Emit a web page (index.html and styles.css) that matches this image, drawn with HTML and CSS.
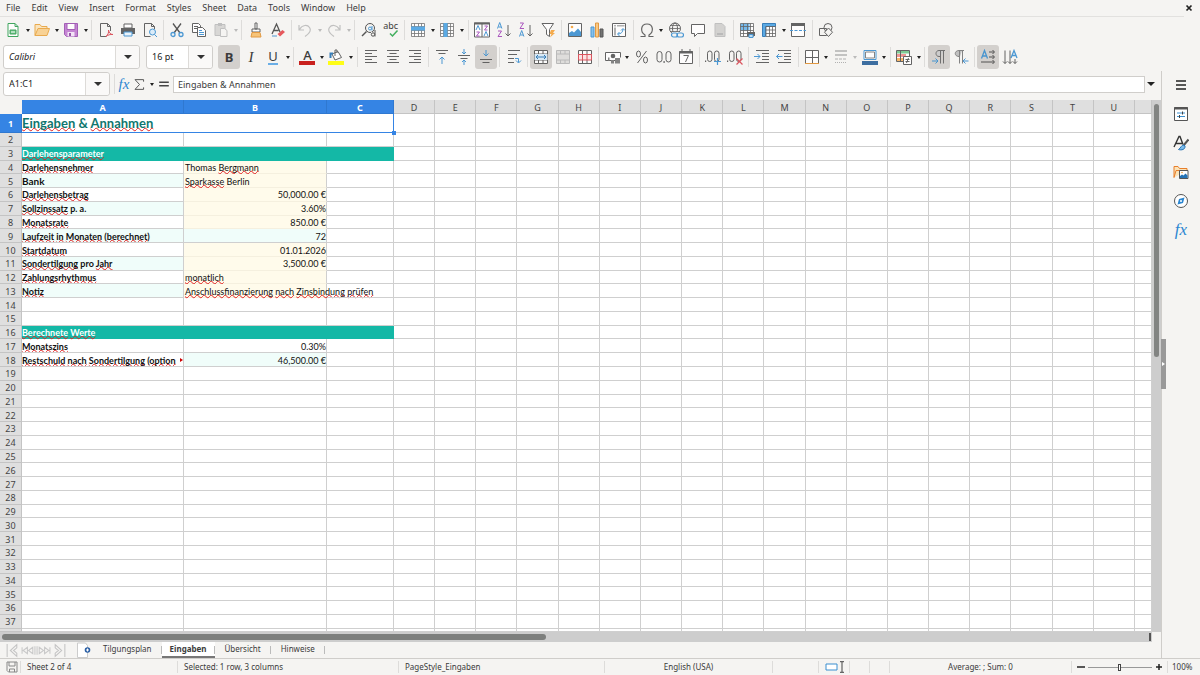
FILE: index.html
```html
<!DOCTYPE html>
<html lang="de">
<head>
<meta charset="utf-8">
<title>Eingaben</title>
<link rel="stylesheet" href="styles.css">
</head>
<body>
<nav class="menubar">
  <button>File</button><button>Edit</button><button>View</button><button>Insert</button><button>Format</button><button>Styles</button><button>Sheet</button><button>Data</button><button>Tools</button><button>Window</button><button>Help</button>
  <button class="close" aria-label="Close"><svg viewBox="0 0 8 8"><path d="M1.5 1.5l5 5m0-5l-5 5" stroke="#222" stroke-width="1.7"/></svg></button>
</nav>

<div class="toolbar standard">
  <button class="tool" aria-label="New"><svg viewBox="0 0 16 16"><path d="M3 1.500h7l3 3v10h-10z" fill="#fff" stroke="#2e9e50"/><path d="M10 1.500v3h3" stroke="#2e9e50"/><path d="M5 8h6v4h-6z" fill="#5dbb78" stroke="#2e9e50"/><path d="M6 10h4" stroke="#fff"/></svg></button><button class="drop" aria-label="New options"></button>
  <button class="tool" aria-label="Open"><svg viewBox="0 0 16 16"><path d="M1 13.500v-11h5l1.500 2h5.500v3" fill="#fbe3b8" stroke="#e8a33d"/><path d="M1 13.500l3-7h11.500l-2.500 7z" fill="#f9cf8b" stroke="#e8a33d"/></svg></button><button class="drop" aria-label="Open options"></button>
  <button class="tool" aria-label="Save"><svg viewBox="0 0 16 16"><path d="M1.500 1.500h13v13h-11l-2-2z" fill="#c07ad0" stroke="#9b4fb0"/><path d="M4 1.500h8v6h-8z" fill="#fff" stroke="#9b4fb0"/><path d="M4.500 10h7v4.500h-7z" fill="#f3e3f7"/><path d="M6 11h2v3h-2z" fill="#8d44a3"/></svg></button><button class="drop" aria-label="Save options"></button>
  <span class="sep"></span>
  <button class="tool" aria-label="Export as PDF"><svg viewBox="0 0 16 16"><path d="M12.500 9v-4.500l-3-3h-7v13h6M9.500 1.500v3h3" stroke="#555" fill="none"/><path d="M8 14.500c2-2 3-4 2.500-6.500c.5 3 2 4.500 4.500 4.500c-3-.3-5 .5-7 2z" stroke="#d9434e"/></svg></button>
  <button class="tool" aria-label="Print"><svg viewBox="0 0 16 16"><path d="M4 2h8v4h-8z" fill="#fff" stroke="#555"/><path d="M1 6h14v6h-14z" fill="#555"/><path d="M4 10h8v4h-8z" fill="#e9f3fb" stroke="#3a8fd0"/></svg></button>
  <button class="tool" aria-label="Print preview"><svg viewBox="0 0 16 16"><path d="M12.500 7v-2.500l-3-3h-7v13h6M9.500 1.500v3h3" stroke="#555"/><circle cx="10.500" cy="10" r="3" fill="#d9ecfa" stroke="#3a8fd0"/><path d="M12.500 12.500l2.500 2.500" stroke="#3a8fd0"/></svg></button>
  <span class="sep"></span>
  <button class="tool" aria-label="Cut"><svg viewBox="0 0 16 16"><path d="M4 1.500l7 9.500M12 1.500l-7 9.500" stroke="#444" stroke-width="1.300"/><circle cx="4" cy="12.500" r="2" stroke="#3a8fd0" stroke-width="1.300"/><circle cx="12" cy="12.500" r="2" stroke="#3a8fd0" stroke-width="1.300"/></svg></button>
  <button class="tool" aria-label="Copy"><svg viewBox="0 0 16 16"><path d="M1.500 1.500h6l2 2v7h-8zM3 4.500h4M3 6.500h4" fill="#fff" stroke="#555"/><path d="M6.500 5.500h5l3 3v6h-8z" fill="#fff" stroke="#555"/><path d="M8 8.500h3M8 10.500h5M8 12.500h5" stroke="#3a8fd0"/></svg></button>
  <button class="tool" aria-label="Paste" disabled><svg viewBox="0 0 16 16"><path d="M2 2.500h10v11h-10z" fill="#d5d4d2" stroke="#bbb"/><path d="M5 1h4v3h-4z" fill="#bbb"/><path d="M7.500 6.500h4l2.500 2v6h-6.500z" fill="#f5f4f2" stroke="#bbb"/></svg></button><button class="drop" aria-label="Paste options" disabled></button>
  <span class="sep"></span>
  <button class="tool" aria-label="Clone formatting"><svg viewBox="0 0 16 16"><path d="M7 1h2v6h-2zM4 7h8v3h-8z" fill="#fff" stroke="#555"/><path d="M4 10.500h8l1 4.500h-10z" fill="#f8bf6c" stroke="#e09030"/></svg></button>
  <button class="tool" aria-label="Clear formatting"><svg viewBox="0 0 16 16"><path d="M2 12l4.500-10l3.500 8M3.500 8.500h5" stroke="#444" stroke-width="1.300"/><path d="M2 14h5" stroke="#3a8fd0"/><path d="M7.500 12l5-4l2.500 2l-5 4.500z" fill="#e5484d"/></svg></button>
  <span class="sep"></span>
  <button class="tool" aria-label="Undo" disabled><svg viewBox="0 0 16 16"><path d="M2 3v5h5M2.500 7.500c3-5 8-5 10-2s0 6-4.500 9" stroke="#bbb" stroke-width="1.200"/></svg></button><button class="drop" aria-label="Undo list" disabled></button>
  <button class="tool" aria-label="Redo" disabled><svg viewBox="0 0 16 16"><path d="M14 3v5h-5M13.500 7.500c-3-5-8-5-10-2s0 6 4.500 9" stroke="#bbb" stroke-width="1.200"/></svg></button><button class="drop" aria-label="Redo list" disabled></button>
  <span class="sep"></span>
  <button class="tool" aria-label="Find and replace"><svg viewBox="0 0 16 16"><circle cx="9" cy="6" r="4.500" stroke="#444"/><path d="M5.500 9.500l-4.500 4.500" stroke="#444" stroke-width="1.500"/><circle cx="9" cy="6.500" r="1.500" stroke="#3a8fd0"/><path d="M11 4v4.500" stroke="#3a8fd0"/><path d="M10 10h5v5h-5z" fill="#f5f4f2"/><circle cx="12" cy="12.500" r="1.700" stroke="#444"/><path d="M14 8v6.500" stroke="#444"/></svg></button>
  <button class="tool spelling" aria-label="Spelling"><span>abc</span><svg viewBox="0 0 16 16"><path d="M7 11.500l2.500 2.500l5-5.500" stroke="#2fa84f" stroke-width="1.500"/></svg></button>
  <span class="sep"></span>
  <button class="tool" aria-label="Rows"><svg viewBox="0 0 16 16"><path d="M1.500 1.500h13v13h-13z" fill="#fff"/><path d="M1.500 1.500h13v13h-13zM1.500 4.500h13M1.500 8.500h13M1.500 11.500h13M4.500 1.500v13M8.500 1.500v13M11.500 1.500v13" stroke="#666" stroke-width=".8"/><path d="M1 4.500h14v4h-14z" fill="#4ba3e3"/></svg></button><button class="drop" aria-label="Row options"></button>
  <button class="tool" aria-label="Columns"><svg viewBox="0 0 16 16"><path d="M1.500 1.500h13v13h-13z" fill="#fff"/><path d="M1.500 1.500h13v13h-13zM1.500 4.500h13M1.500 8.500h13M1.500 11.500h13M4.500 1.500v13M8.500 1.500v13M11.500 1.500v13" stroke="#666" stroke-width=".8"/><path d="M4.500 1h4v14h-4z" fill="#4ba3e3"/></svg></button><button class="drop" aria-label="Column options"></button>
  <span class="sep"></span>
  <button class="tool" aria-label="Sort"><svg viewBox="0 0 16 16"><path d="M.5 1h15v14h-15zM8 1v14" fill="#fff" stroke="#555"/><path d="M0 1.500h16" stroke="#555" stroke-width="2"/><path d="M2 8l2-4.500l2 4.500M10 14l2-4.500l2 4.500" stroke="#3a8fd0"/><path d="M2.500 10h3l-3 4h3M10.500 4h3l-3 4h3" stroke="#a347ba"/></svg></button>
  <button class="tool" aria-label="Sort ascending"><svg viewBox="0 0 16 16"><path d="M1.500 6.500l2.200-6l2.200 6M2.500 5h2.500" stroke="#3a8fd0"/><path d="M2 9h3.500l-3.500 5.500h4" stroke="#a347ba"/><path d="M12 3v11M9.500 11.500l2.500 2.500l2.500-2.500" stroke="#555"/></svg></button>
  <button class="tool" aria-label="Sort descending"><svg viewBox="0 0 16 16"><path d="M2 1h3.500l-3.500 5.500h4" stroke="#a347ba"/><path d="M1.500 14.500l2.200-6l2.200 6M2.500 13h2.500" stroke="#3a8fd0"/><path d="M12 3v11M9.500 11.500l2.500 2.500l2.500-2.500" stroke="#555"/></svg></button>
  <button class="tool" aria-label="AutoFilter"><svg viewBox="0 0 16 16"><path d="M2 1.500h11.500l-4 6v7l-3-2v-5z" fill="#fff" stroke="#555"/><path d="M11 8h4l-2 3h2l-5 4.500l1.500-3.500h-2z" fill="#f4a33a"/></svg></button>
  <span class="sep"></span>
  <button class="tool" aria-label="Insert image"><svg viewBox="0 0 16 16"><path d="M1.500 1.500h13v13h-13z" fill="#fff" stroke="#555"/><path d="M2 14v-3l3-2l2 1.500l4-4l3 3.500v4z" fill="#3a8fd0"/><circle cx="5" cy="5" r="1.300" fill="#f4a33a"/></svg></button>
  <button class="tool" aria-label="Insert chart"><svg viewBox="0 0 16 16"><path d="M2 5h3v10h-3z" fill="#7bbcec" stroke="#3a8fd0"/><path d="M6.500 1h3v14h-3z" fill="#fac57a" stroke="#e09030"/><path d="M11 7h3v8h-3z" fill="#666" stroke="#444"/></svg></button>
  <button class="tool" aria-label="Pivot table"><svg viewBox="0 0 16 16"><path d="M1.500 1.500h13v13h-13z" fill="#fff" stroke="#555"/><path d="M3 5.500h2v8h-2zM3 3h2v1.500h-2zM6 3h7.500v1.500h-7.500z" fill="#aaa"/><path d="M7 12c3 0 5-2 5-5M6.500 12l2-2M6.500 12l2 2M12 6.500l-2 2M12 6.500l2 2" stroke="#3a8fd0"/></svg></button>
  <span class="sep"></span>
  <button class="tool" aria-label="Special character"><svg viewBox="0 0 16 16"><path d="M1.500 14.500h4.500v-1.500c-5-3-4.500-11 2-11s7 8 2 11v1.500h4.500" stroke="#555" stroke-width="1.200"/></svg></button><button class="drop" aria-label="Special character list"></button>
  <button class="tool" aria-label="Hyperlink"><svg viewBox="0 0 16 16"><circle cx="7" cy="6.500" r="5.500" stroke="#555"/><ellipse cx="7" cy="6.500" rx="2.500" ry="5.500" stroke="#555"/><path d="M1.500 6.500h11M2.500 3.500h9M2.500 9.500h9" stroke="#555" stroke-width=".8"/><path d="M4 10h12v6h-12z" fill="#f5f4f2"/><rect x="3.500" y="11" width="6" height="4" rx="2" stroke="#3a8fd0" stroke-width="1.200"/><rect x="9" y="11" width="6.500" height="4" rx="2" stroke="#3a8fd0" stroke-width="1.200"/></svg></button>
  <button class="tool" aria-label="Comment"><svg viewBox="0 0 16 16"><path d="M1.500 2.500h13v9h-7l-3 3v-3h-3z" fill="#fff" stroke="#555"/></svg></button>
  <button class="tool" aria-label="Headers and footers" disabled><svg viewBox="0 0 16 16"><path d="M3 1.500h7l3 3v10h-10z" fill="#d0cfcd" stroke="#bbb"/><path d="M5 11h6v2h-6z" fill="#b4b4b4"/></svg></button>
  <span class="sep"></span>
  <button class="tool" aria-label="Print area"><svg viewBox="0 0 16 16"><path d="M1.500 1.500h13v13h-13z" fill="#fff"/><path d="M1.500 1.500h9v7h-9z" fill="#69b3ea"/><path d="M1.500 1.500h13v13h-13zM1.500 4.500h13M1.500 8.500h13M1.500 11.500h13M4.500 1.500v13M8.500 1.500v13M11.500 1.500v13" stroke="#555" stroke-width=".8"/><path d="M8 10h8v4h-8z" fill="#555"/><path d="M10 12.500h4v3h-4z" fill="#b9dcf6" stroke="#3a8fd0"/></svg></button>
  <button class="tool" aria-label="Freeze rows and columns"><svg viewBox="0 0 16 16"><path d="M1.500 1.500h13v13h-13z" fill="#fff"/><path d="M1.500 1.500h13v3h-10v10h-3z" fill="#4ba3e3" stroke="#2573b5"/><path d="M5 8h9.500M5 11.500h9.500M8.500 4v10.500M11.500 4v10.500M5 4.500h9.500v10h-9.500z" stroke="#555" stroke-width=".8"/></svg></button><button class="drop" aria-label="Freeze options"></button>
  <button class="tool" aria-label="Split window"><svg viewBox="0 0 16 16"><path d="M1.500 1.500h13v13h-13z" fill="#fff" stroke="#555"/><path d="M1 2.500h14" stroke="#555" stroke-width="3"/><path d="M0 8.500h16" stroke="#3a8fd0" stroke-dasharray="3 1.500"/></svg></button>
  <span class="sep"></span>
  <button class="tool" aria-label="Draw functions"><svg viewBox="0 0 16 16"><path d="M1.500 6.500h7v7h-7z" stroke="#555"/><circle cx="10" cy="5.500" r="4" stroke="#555"/><path d="M10.500 6l4 4.200l-4 4.300l-4-4.300z" fill="#f5f4f2" stroke="#555"/></svg></button>
</div>

<div class="toolbar formatting">
  <label class="combo font-name"><select aria-label="Font name"><option>Calibri</option></select></label>
  <label class="combo font-size"><select aria-label="Font size"><option>16 pt</option></select></label>
  <button class="tool on letter bold" aria-label="Bold">B</button>
  <button class="tool letter italic" aria-label="Italic">I</button>
  <button class="tool letter under" aria-label="Underline"><span>U</span></button><button class="drop" aria-label="Underline options"></button>
  <span class="sep"></span>
  <button class="tool letter" aria-label="Font colour"><span class="ink">A</span></button><button class="drop" aria-label="Font colours"></button>
  <button class="tool" aria-label="Highlight colour"><svg viewBox="0 0 16 16"><path d="M4 5l6-2.500l3.500 6l-6.500 2.500z" fill="#fff" stroke="#555"/><path d="M7 7v-6h2v3" stroke="#555"/><path d="M2.500 9v-4.500h2.500" stroke="#2573b5" stroke-width="2"/><path d="M0 12h16v4h-16z" fill="#ff0"/></svg></button><button class="drop" aria-label="Highlight colours"></button>
  <span class="sep"></span>
  <button class="tool" aria-label="Align left"><svg viewBox="0 0 16 16"><path d="M2 1.500h12M2 4.500h7M2 7.500h12M2 10.500h7M2 13.500h12" stroke="#555"/></svg></button>
  <button class="tool" aria-label="Centre"><svg viewBox="0 0 16 16"><path d="M2 1.500h12M4.500 4.500h7M2 7.500h12M4.500 10.500h7M2 13.500h12" stroke="#555"/></svg></button>
  <button class="tool" aria-label="Align right"><svg viewBox="0 0 16 16"><path d="M2 1.500h12M7 4.500h7M2 7.500h12M7 10.500h7M2 13.500h12" stroke="#555"/></svg></button>
  <span class="sep"></span>
  <button class="tool" aria-label="Align top"><svg viewBox="0 0 16 16"><path d="M2 1.500h12M4.500 4.500h7" stroke="#555"/><path d="M8 15v-7M5.500 10.500l2.500-2.500l2.500 2.500" stroke="#3a8fd0"/></svg></button>
  <button class="tool" aria-label="Centre vertically"><svg viewBox="0 0 16 16"><path d="M2 6.500h12M4.500 9.500h7" stroke="#555"/><path d="M8 0v5M6 3l2 2l2-2M8 16v-5M6 13l2-2l2 2" stroke="#3a8fd0"/></svg></button>
  <button class="tool on" aria-label="Align bottom"><svg viewBox="0 0 16 16"><path d="M2 10.500h12M4.500 13.500h7" stroke="#555"/><path d="M8 1v6M5.500 4.500l2.500 2.500l2.500-2.500" stroke="#3a8fd0"/></svg></button>
  <span class="sep"></span>
  <button class="tool" aria-label="Wrap text"><svg viewBox="0 0 16 16"><path d="M2 1.500h12M2 5.500h9M2 9.500h6M2 13.500h6" stroke="#555"/><path d="M9 9.500h3.500v4M10 11.500l2.500 2.500l2.500-2.500" stroke="#3a8fd0"/></svg></button>
  <span class="sep"></span>
  <button class="tool on" aria-label="Merge and centre"><svg viewBox="0 0 16 16"><path d="M1.500 1.500h13v13h-13zM1.500 5h13M1.500 11h13M5.500 1.500v3.500M10 1.500v3.500M5.500 11v3.500M10 11v3.500" fill="#fff" stroke="#555"/><path d="M1.500 5h13v6h-13z" fill="#d9ecfa"/><path d="M3 8h10M5 6l-2 2l2 2M11 6l2 2l-2 2" stroke="#2573b5"/></svg></button>
  <button class="tool" aria-label="Merge cells" disabled><svg viewBox="0 0 16 16"><path d="M1.500 1.500h13v13h-13zM1.500 5h13M1.500 11h13M5.500 1.500v3.500M10 1.500v3.500M5.500 11v3.500M10 11v3.500" fill="#dcdbd9" stroke="#b4b4b4"/></svg></button>
  <button class="tool" aria-label="Unmerge cells"><svg viewBox="0 0 16 16"><path d="M1.500 1.500h13v13h-13zM5.500 1.500v3.500M10 1.500v3.500M5.500 11v3.500M10 11v3.500" fill="#fff" stroke="#555"/><path d="M1.500 5.500h13v5.500h-13zM5.500 5.500v5.500M10 5.500v5.500" fill="#fbe1e2" stroke="#d9434e"/></svg></button>
  <span class="sep"></span>
  <button class="tool" aria-label="Currency"><svg viewBox="0 0 16 16"><path d="M10 11.500h-9.500v-8h15v5" fill="#fff" stroke="#555"/><circle cx="8" cy="7" r="2.300" fill="#555"/><path d="M3 8.500h1.500v3h-1.500zM6 11h3v3.500h-3zM10 9h5v5.500h-5z" fill="#777"/></svg></button><button class="drop" aria-label="Currency list"></button>
  <button class="tool" aria-label="Percent"><svg viewBox="0 0 16 16"><path d="M12.500 2l-9 12" stroke="#555"/><ellipse cx="4.500" cy="5" rx="2" ry="3" stroke="#555"/><ellipse cx="11.500" cy="11" rx="2" ry="3" stroke="#555"/></svg></button>
  <button class="tool" aria-label="Number"><svg viewBox="0 0 16 16"><rect x="1" y="2.500" width="5" height="10.500" rx="2.500" stroke="#555"/><rect x="10" y="2.500" width="5" height="10.500" rx="2.500" stroke="#555"/><path d="M7.500 12h1.200v2h-1.200z" fill="#555"/></svg></button>
  <button class="tool" aria-label="Date"><svg viewBox="0 0 16 16"><path d="M1.500 2.500h13v12h-13z" fill="#fff" stroke="#555"/><path d="M1 3.500h14" stroke="#555" stroke-width="2"/><path d="M4 0v3M12 0v3M5.500 6.500h5l-3 6.500" stroke="#555"/></svg></button>
  <span class="sep"></span>
  <button class="tool" aria-label="Add decimal place"><svg viewBox="0 0 16 16"><rect x="2.500" y="2" width="4.500" height="10.500" rx="2.250" stroke="#555"/><rect x="9.500" y="2" width="4.500" height="10.500" rx="2.250" stroke="#555"/><path d="M0 11.500h1.200v1.500h-1.200z" fill="#555"/><path d="M12.500 9v7M9 12.500h7" stroke="#3a8fd0" stroke-width="1.200"/></svg></button>
  <button class="tool" aria-label="Delete decimal place"><svg viewBox="0 0 16 16"><rect x="2.500" y="2" width="4.500" height="10.500" rx="2.250" stroke="#555"/><rect x="9.500" y="2" width="4.500" height="10.500" rx="2.250" stroke="#555"/><path d="M0 11.500h1.200v1.500h-1.200z" fill="#555"/><path d="M9.500 9.500l6 6m0-6l-6 6" stroke="#d9434e" stroke-width="1.200"/></svg></button>
  <span class="sep"></span>
  <button class="tool" aria-label="Increase indent"><svg viewBox="0 0 16 16"><path d="M2 1.500h13M8 4.500h7M8 7.500h7M8 10.500h7M2 13.500h13" stroke="#555"/><path d="M0 7.500h6M3.500 5l2.500 2.500l-2.500 2.500" stroke="#3a8fd0"/></svg></button>
  <button class="tool" aria-label="Decrease indent"><svg viewBox="0 0 16 16"><path d="M2 1.500h13M8 4.500h7M8 7.500h7M8 10.500h7M2 13.500h13" stroke="#555"/><path d="M.5 7.500h6M3 5l-2.500 2.500l2.500 2.500" stroke="#3a8fd0"/></svg></button>
  <span class="sep"></span>
  <button class="tool" aria-label="Borders"><svg viewBox="0 0 16 16"><path d="M1.500 1.500h13v13h-13zM8.500 2v12M2 8.500h12" fill="#fff" stroke="#555"/><path d="M1 14.500h14" stroke="#e09030"/></svg></button><button class="drop" aria-label="Border list"></button>
  <button class="tool" aria-label="Border style" disabled><svg viewBox="0 0 16 16"><path d="M2 2h12M2 6h12" stroke="#aaa" stroke-width="1.500"/><path d="M2 10h12" stroke="#aaa" stroke-dasharray="3 1"/><path d="M2 13.500h12" stroke="#aaa" stroke-dasharray="1 1"/></svg></button><button class="drop" aria-label="Border style list" disabled></button>
  <button class="tool" aria-label="Border colour"><svg viewBox="0 0 16 16"><path d="M2 1.500h12v9h-12z" fill="#fff" stroke="#3a8fd0"/><path d="M3.500 3h9v6h-9z" stroke="#777"/><path d="M0 12h16v4h-16z" fill="#2a6099"/></svg></button><button class="drop" aria-label="Border colours"></button>
  <span class="sep"></span>
  <button class="tool" aria-label="Conditional formatting"><svg viewBox="0 0 16 16"><path d="M.5 1.500h13v11h-13z" fill="#fff" stroke="#555"/><path d="M1 2h12v2.500h-12z" fill="#72c78b"/><path d="M1 5h9v3h-9z" fill="#f08c8c"/><path d="M1 9h6v3h-6z" fill="#f8b25c"/><path d="M4.500 1.500v11" stroke="#555"/><path d="M7.500 7.500h8v8h-8zM9.500 10.500h4M9.500 12.500h4M12.500 9l-2 5" fill="#fff" stroke="#555"/></svg></button><button class="drop" aria-label="Conditional list"></button>
  <span class="sep"></span>
  <button class="tool on" aria-label="Left to right"><svg viewBox="0 0 16 16"><path d="M14 1.500h-6c-4 0-4 6 0 6h1z" fill="#ccc"/><path d="M14 1.500h-6c-4 0-4 6 0 6h1M9.500 1.500v13M12.500 1.500v13" stroke="#666"/><path d="M1 12h6M4.500 9.500l2.500 2.500l-2.500 2.500" stroke="#3a8fd0"/></svg></button>
  <button class="tool" aria-label="Right to left"><svg viewBox="0 0 16 16"><path d="M9 1.500h-3c-5 0-5 6 0 6h1z" fill="#bbb"/><path d="M11 1.500h-5c-5 0-5 6 0 6h1M6.500 1.500v13M9.500 1.500v13" stroke="#777"/><path d="M15.500 12h-5M12.500 9.500l-2.500 2.500l2.500 2.500" stroke="#3a8fd0"/></svg></button>
  <span class="sep"></span>
  <button class="tool on" aria-label="Horizontal text"><svg viewBox="0 0 16 16"><path d="M1.500 9.500l3-8l3 8M2.500 7h4" stroke="#3a8fd0" stroke-width="1.300"/><path d="M9 3h5M9 8h5M1 13h13M12.500 1l2 2l-2 2M12.500 6l2 2l-2 2M12.500 11l2 2l-2 2" stroke="#444"/></svg></button>
  <button class="tool" aria-label="Vertical text"><svg viewBox="0 0 16 16"><path d="M9 9l3-7.500l3 7.500M10 6.500h4" stroke="#3a8fd0" stroke-width="1.300"/><path d="M3 1.500v13M8 1.500v13M13 10v4.500M1 12.500l2 2l2-2M6 12.500l2 2l2-2M11 12.500l2 2l2-2" stroke="#555"/></svg></button>
</div>

<div class="workspace">
  <main class="document">
    <div class="formula-bar">
      <label class="combo name-box"><select aria-label="Name box"><option>A1:C1</option></select></label>
      <span class="sep"></span>
      <button class="fx" aria-label="Function wizard">fx</button>
      <button class="sum" aria-label="Select function"><svg viewBox="0 0 16 16"><path d="M13 4.500v-2.500h-10.500l5.500 6l-5.500 6h10.500v-2.500" stroke="#555" stroke-width="1.200"/></svg></button><button class="drop" aria-label="Function list"></button>
      <button class="equals" aria-label="Formula"><svg viewBox="0 0 10 10"><path d="M1 3.500h8M1 6.500h8" stroke="#444" stroke-width="1.300"/></svg></button>
      <input class="formula" type="text" value="Eingaben &amp; Annahmen" aria-label="Input line">
      <button class="drop large" aria-label="Expand formula bar"></button>
    </div>
    <div class="grid-area">
      <div class="sheet"><table id="cells"></table></div>
      <div class="vscroll"><div class="thumb"></div></div>
    </div>
    <div class="hscroll"><div class="thumb"></div><i class="splitter"></i></div>
    <div class="tabs">
      <div class="tab-nav">
        <button aria-label="First sheet"><svg viewBox="0 0 14 14"><path d="M2 1v12M11 1.500l-6 5.500l6 5.500v-3l-3-2.500l3-2.500z" stroke="#c4c4c4"/></svg></button>
        <button aria-label="Previous sheet"><svg viewBox="0 0 14 14"><path d="M1 4v6M6 4l-4 3l4 3zM11 4l-4 3l4 3zM13 3v8" stroke="#c9c9c9"/></svg></button>
        <button aria-label="Next sheet"><svg viewBox="0 0 14 14"><path d="M3 4l4 3l-4 3zM8 4l4 3l-4 3zM1 3v8M13 4v6" stroke="#c9c9c9"/></svg></button>
        <button aria-label="Last sheet"><svg viewBox="0 0 14 14"><path d="M12 1v12M3 1.500l6 5.500l-6 5.500v-3l3-2.500l-3-2.500z" stroke="#c4c4c4"/></svg></button>
      </div>
      <button class="add" aria-label="Add sheet"><svg viewBox="0 0 14 16"><path d="M.5 1v14.500h10v-12l-2-2.500z" fill="#fff" stroke="#ccc"/><circle cx="10.500" cy="8" r="2.800" fill="#2a5fa5"/><path d="M9 8h3M10.500 6.500v3" stroke="#fff"/></svg></button>
      <button class="tab">Tilgungsplan</button><button class="tab active">Eingaben</button><button class="tab">Übersicht</button><button class="tab">Hinweise</button>
    </div>
  </main>
  <aside class="sidebar">
    <button aria-label="Sidebar settings"><svg viewBox="0 0 16 16"><path d="M3 4h10M3 8h10M3 12h10" stroke="#222" stroke-width="1.500"/></svg></button>
    <button aria-label="Properties"><svg viewBox="0 0 16 16"><path d="M1.500 1.500h13v13h-13z" fill="#fff" stroke="#555"/><path d="M1 2.500h14" stroke="#555" stroke-width="2"/><path d="M4 7h8M4 10.500h8" stroke="#3a8fd0"/><path d="M9.500 5.500v3M6.500 9v3" stroke="#444"/></svg></button>
    <button aria-label="Styles"><svg viewBox="0 0 16 16"><path d="M1 12l5-10.500h1l3 8M3 8.500h6" stroke="#333" stroke-width="1.400"/><path d="M15.500 4.500l-5 6" stroke="#555" stroke-width="2"/><path d="M11 10c-3 0-3 3-5.500 4.500c3 1 7 0 6.500-3.500z" fill="#7bbcec" stroke="#2573b5"/></svg></button>
    <button aria-label="Gallery"><svg viewBox="0 0 16 16"><path d="M1 13.500v-11h4l1.500 2h7.500v2M1 13.500l2-7h4" fill="#fbe3b8" stroke="#e87f2b"/><path d="M6.500 6.500h8.500v8h-8.500z" fill="#fff" stroke="#555"/><path d="M7 14v-2l2-1.500l1.500 1l2-2l2 2v2.500z" fill="#2573b5"/><circle cx="9" cy="8.500" r=".8" fill="#f4a33a"/></svg></button>
    <button aria-label="Navigator"><svg viewBox="0 0 16 16"><circle cx="8" cy="8" r="6.500" fill="#fff" stroke="#555"/><path d="M11.500 4.500l-1.500 5.500l-5.500 1.500l1.500-5.500z" fill="#2b86d1"/><circle cx="8" cy="8" r="1" fill="#fff"/></svg></button>
    <button class="fx" aria-label="Functions">fx</button>
    <div class="handle"></div>
  </aside>
</div>

<footer class="status">
  <span class="doc-state"><svg viewBox="0 0 12 12"><path d="M1 1h10v10h-8.500l-1.500-1.500zM3 1v4h6v-4M3.500 11v-3h5v3" stroke="#888"/></svg></span>
  <span class="position">Sheet 2 of 4</span>
  <span class="selection">Selected: 1 row, 3 columns</span>
  <span class="page-style">PageStyle_Eingaben</span>
  <span class="language">English (USA)</span>
  <span class="mode"></span>
  <span class="select-mode"><svg viewBox="0 0 20 12"><path d="M1 3h11v6h-11z" fill="#fff" stroke="#3a8fd0"/><path d="M17 1v10M15 .7h4M15 11.300h4" stroke="#444"/></svg></span>
  <span class="mode small"></span><span class="mode small"></span>
  <span class="sums">Average: ; Sum: 0</span>
  <span class="zoom"><button aria-label="Zoom out"><svg viewBox="0 0 8 8"><path d="M0 4h8" stroke="#222" stroke-width="1.500"/></svg></button><input type="range" min="0" max="100" value="49" aria-label="Zoom"><button aria-label="Zoom in"><svg viewBox="0 0 8 8"><path d="M1 4h6M4 1v6" stroke="#222" stroke-width="1.500"/></svg></button></span>
  <span class="percent">100%</span>
</footer>
<script src="sheet.js"></script>
</body>
</html>
```
FILE: styles.css
```css
* { box-sizing: border-box; }
html, body { height: 100%; }
body {
  margin: 0;
  display: flex;
  flex-direction: column;
  overflow: hidden;
  background: #f5f4f2;
  color: #3b3b3b;
  font: 9px/12px "Noto Sans", sans-serif;
}
button, input, select { font: inherit; color: inherit; }
button {
  display: flex;
  align-items: center;
  justify-content: center;
  padding: 0;
  border: 0;
  background: none;
}
svg { display: block; fill: none; }

.menubar {
  display: flex;
  align-items: center;
  height: 17px;
  flex: none;
  padding-left: 6px;
  margin-right: 16px;
  gap: 11px;
  border-bottom: 1px solid #e2e1df;
}
.menubar .close { margin-left: auto; margin-right: -9px; width: 8px; }
.menubar .close svg { width: 8px; height: 8px; }

.toolbar { display: flex; align-items: center; height: 27px; flex: none; padding: 0 0 1px 2px; }
.standard { max-width: 837px; }
.formatting { max-width: 1021px; }
.tool { flex: none; width: 22px; height: 24px; border-radius: 3px; }
.tool svg { width: 16px; height: 16px; opacity: .9; }
.tool.on { background: #d3d0cd; }
.drop { flex: none; width: 7px; height: 24px; }
.drop::before {
  content: "";
  border: 2px solid transparent;
  border-top: 3px solid #222;
  border-bottom: 0;
}
.drop:disabled::before { border-top-color: #bbb; }
.drop.large::before { border-width: 4px 4px 0; }
.sep { flex: 1 1 3px; height: 20px; background: linear-gradient(#dddcda, #dddcda) center / 1px 100% no-repeat; }
.spelling { position: relative; }
.spelling span { line-height: 8px; align-self: flex-start; margin-top: 4px; }
.spelling svg { position: absolute; left: 3px; top: 4px; }
.letter { font-size: 13px; line-height: 16px; }
.bold { font-weight: bold; }
.italic { font-family: "Liberation Serif", serif; font-style: italic; font-size: 15px; }
.under span { line-height: 13px; border-bottom: 2px solid #6aaee6; }
.ink { width: 16px; font-weight: 500; line-height: 12px; border-bottom: 4px solid #c9211e; }

.combo {
  position: relative;
  flex: none;
  height: 24px;
  border: 1px solid #d0cecb;
  border-radius: 3px;
  background: #fff;
}
.combo select {
  appearance: none;
  width: 100%;
  height: 100%;
  padding: 0 24px 0 5px;
  border: 0;
  background: none;
  color: #222;
}
.combo::before {
  content: "";
  position: absolute;
  right: 0;
  width: 23px;
  height: 100%;
  border-left: 1px solid #dddbd8;
  background: #faf9f8;
  border-radius: 0 3px 3px 0;
}
.combo::after {
  content: "";
  position: absolute;
  right: 7px;
  top: 9px;
  border: 4px solid transparent;
  border-top-color: #333;
  border-bottom: 0;
}
.font-name { width: 137px; margin: 0 6px 0 1px; font-style: italic; }
.font-size { width: 67px; margin-right: 5px; }

.workspace { flex: 1; display: flex; min-height: 0; }
.document { flex: 1; min-width: 0; display: flex; flex-direction: column; }
.formula-bar { display: flex; align-items: center; height: 26px; margin-bottom: 3px; padding-left: 3px; flex: none; }
.formula-bar .sep { flex: none; width: 8px; }
.name-box { width: 107px; }
.fx { width: 12px; color: #2b86d1; font: italic 15px/16px "Liberation Serif", serif; }
.sum { width: 18px; }
.sum svg { width: 13px; height: 13px; }
.equals { width: 18px; }
.equals svg { width: 12px; height: 12px; }
.formula { flex: 1; min-width: 0; height: 17px; padding: 0 4px; border: 1px solid #d0cecb; background: #fff; }
.formula-bar .large { width: 12px; margin-right: 4px; }

.grid-area { flex: 1; min-height: 0; display: flex; }
.sheet { flex: 1; min-width: 0; overflow: hidden; background: #fff; }
.sheet table { width: 100%; height: 100%; table-layout: fixed; border-collapse: separate; border-spacing: 0; }
.sheet th { padding: 1px 0 0; font-weight: normal; text-align: center; line-height: 11px; background: #dfdfdf; border: solid #c4c4c4; border-width: 0 1px 1px 0; color: #444; }
.sheet td { padding: 1px 0 0 1px; line-height: 11px; border: solid #cfcfcf; border-width: 0 1px 1px 0; white-space: nowrap; color: #111; font-family: Lato, sans-serif; position: relative; }
.sheet .corner { background: #f5f4f2; border-color: #f5f4f2; }
.sheet .picked { background: #3584e4; border-color: #2f78d0; color: #fff; font-weight: bold; }
.col-row { width: 22px; }
.col-a { width: 162px; }
.col-b { width: 143px; }
.col-c { width: 67px; }
.col-cut { width: 17px; }
.row-head { height: 14px; }
.row-title { height: 19px; }
.row-cut { height: 3px; }
.row-cut th, .row-cut td { padding: 0; }
.sheet .title { padding: 0; font-size: 13px; line-height: 15px; font-weight: bold; color: #0f766e; border: 0; box-shadow: inset 0 -1px #3584e4, inset -1px 0 #3584e4; }
.sheet .title::after { content: ""; position: absolute; right: -2px; bottom: -2px; width: 4px; height: 4px; background: #3584e4; z-index: 1; }
.sheet .section { background: #14b8a6; border-color: #14b8a6; color: #fff; font-weight: bold; padding-left: 0; }
.sheet .label { font-weight: bold; overflow: hidden; padding-left: 0; }
.sheet .large { font-size: 10px; }
.sheet .mint { background: #f0fdfa; }
.sheet .entry { background: #fffbeb; border-bottom-color: #f5f0df; }
.sheet .number { text-align: right; }
.sheet .clipped::after { content: ""; position: absolute; right: 0; top: 5px; border: 2px solid transparent; border-left: 3px solid #c00; border-right: 0; }
.misspelt { text-decoration: underline wavy #e02020 1px; text-decoration-skip-ink: none; text-underline-offset: -1px; }

.vscroll { width: 9px; background: #cdcdcd; padding: 4px 2px 0; }
.vscroll .thumb { height: 48%; border-radius: 3px; background: #828482; }
.hscroll { height: 10px; margin-right: 9px; flex: none; display: flex; align-items: center; padding-left: 2px; background: #cdcdcd; }
.hscroll .thumb { width: 47.3%; height: 6px; border-radius: 3px; background: #7d7f7d; }
.splitter { width: 2px; height: 8px; margin: 0 1px 0 auto; background: #555; }

.tabs { display: flex; height: 16px; flex: none; font-size: 8px; padding-left: 5px; }
.tab-nav { display: flex; width: 62px; }
.tab-nav button { flex: 1; }
.tab-nav svg { width: 15px; height: 15px; }
.add { width: 26px; padding-left: 8px; }
.add svg { width: 14px; height: 16px; }
.tab { position: relative; padding: 0 10px 2px; }
.tab::after { content: ""; position: absolute; right: 0; top: 4px; height: 8px; border-right: 1px solid #bbb; }
.tab.active { background: #fff; font-weight: bold; border-bottom: 2px solid #777; padding: 0 8px; }

.sidebar { position: relative; width: 39px; border-left: 1px solid #cfcdca; display: flex; flex-direction: column; align-items: center; padding: 6px 0 0; gap: 13px; }
.sidebar button { width: 16px; height: 16px; flex: none; }
.sidebar svg { width: 16px; height: 16px; }
.sidebar .fx { font-size: 17px; }
.handle { position: absolute; left: -1px; top: 268px; width: 5px; height: 50px; background: #999; }
.handle::after { content: ""; position: absolute; left: 1px; top: 23px; border: 2px solid transparent; border-left: 3px solid #fff; border-right: 0; }

.status { display: flex; align-items: center; height: 17px; flex: none; font-size: 8px; border-top: 1px solid #cfcdca; }
.status > span { height: 12px; border-right: 1px solid #dddcda; padding-left: 6px; white-space: nowrap; }
.status .doc-state { width: 21px; }
.doc-state svg { width: 12px; height: 12px; }
.status .position { width: 157px; }
.status .selection { width: 221px; }
.status .page-style { width: 206px; }
.status .language { flex: 1; padding: 0; text-align: center; }
.mode { width: 46px; }
.status .select-mode { width: 31px; }
.select-mode svg { width: 20px; height: 12px; }
.status .small { width: 20px; }
.status .sums { width: 182px; padding: 0; text-align: center; }
.status .zoom { display: flex; align-items: center; width: 96px; padding: 0 3px 0 4px; }
.zoom button { flex: none; width: 10px; }
.zoom svg { width: 8px; height: 8px; }
.zoom input { appearance: none; flex: 1; min-width: 0; height: 10px; margin: 0 2px; background: linear-gradient(#999, #999) center / 100% 1px no-repeat; }
.zoom input::-webkit-slider-thumb { appearance: none; width: 3px; height: 7px; border: 1px solid #444; background: #fff; }
.status .percent { width: 32px; padding-left: 4px; border: 0; }
```
FILE: sheet.js
```js
// Words between underscores carry a spelling mark.
const rows = {
  4: ["_Darlehensnehmer_", "Thomas _Bergmann_", "entry"],
  5: ["Bank", "_Sparkasse_ Berlin", "entry"],
  6: ["_Darlehensbetrag_", "50,000.00 €", "entry number"],
  7: ["_Sollzinssatz_ p. a.", "3.60%", "entry number"],
  8: ["_Monatsrate_", "850.00 €", "entry number"],
  9: ["_Laufzeit_ _in_ _Monaten_ (_berechnet_)", "72", "mint number"],
  10: ["_Startdatum_", "01.01.2026", "entry number"],
  11: ["_Sondertilgung_ pro _Jahr_", "3,500.00 €", "entry number"],
  12: ["_Zahlungsrhythmus_", "_monatlich_", "entry"],
  13: ["_Notiz_", "_Anschlussfinanzierung_ _nach_ _Zinsbindung_ _prüfen_", "entry"],
  17: ["_Monatszins_", "0.30%", "number"],
  18: ["_Restschuld_ _nach_ _Sondertilgung_ (_option_", "46,500.00 €", "mint number"]
};
const sections = { 3: "_Darlehensparameter_", 16: "_Berechnete_ _Werte_" };
const letters = "ABCDEFGHIJKLMNOPQRSTU".split("");
const mark = text => text.replace(/_([^_]+)_/g, '<span class="misspelt">$1</span>');
const blanks = "<td></td>".repeat(19);

let html = '<colgroup><col class="col-row"><col class="col-a"><col class="col-b"><col class="col-c">' +
  "<col>".repeat(18) + '<col class="col-cut"></colgroup>';
html += '<tr class="row-head"><th class="corner"></th>' +
  letters.map((l, i) => `<th class="${i < 3 ? "picked" : ""}">${l}</th>`).join("") + "<th></th></tr>";
html += `<tr class="row-title"><th class="picked">1</th><td class="title" colspan="3">${mark("_Eingaben_ & _Annahmen_")}</td>${blanks}</tr>`;

for (let n = 2; n <= 37; n++) {
  let cells = "<td></td><td></td><td></td>";
  if (sections[n]) {
    cells = `<td class="section" colspan="3">${mark(sections[n])}</td>`;
  } else if (rows[n]) {
    const [label, value, kind] = rows[n];
    const shade = n % 2 && n < 14 ? " mint" : "";
    const extra = n === 5 ? " large" : n === 18 ? " clipped" : "";
    cells = `<td class="label${shade}${extra}">${mark(label)}</td><td class="${kind}">${mark(value)}</td><td></td>`;
  }
  html += `<tr><th>${n}</th>${cells}${blanks}</tr>`;
}
html += `<tr class="row-cut"><th></th><td></td><td></td><td></td>${blanks}</tr>`;
document.getElementById("cells").innerHTML = html;
```
